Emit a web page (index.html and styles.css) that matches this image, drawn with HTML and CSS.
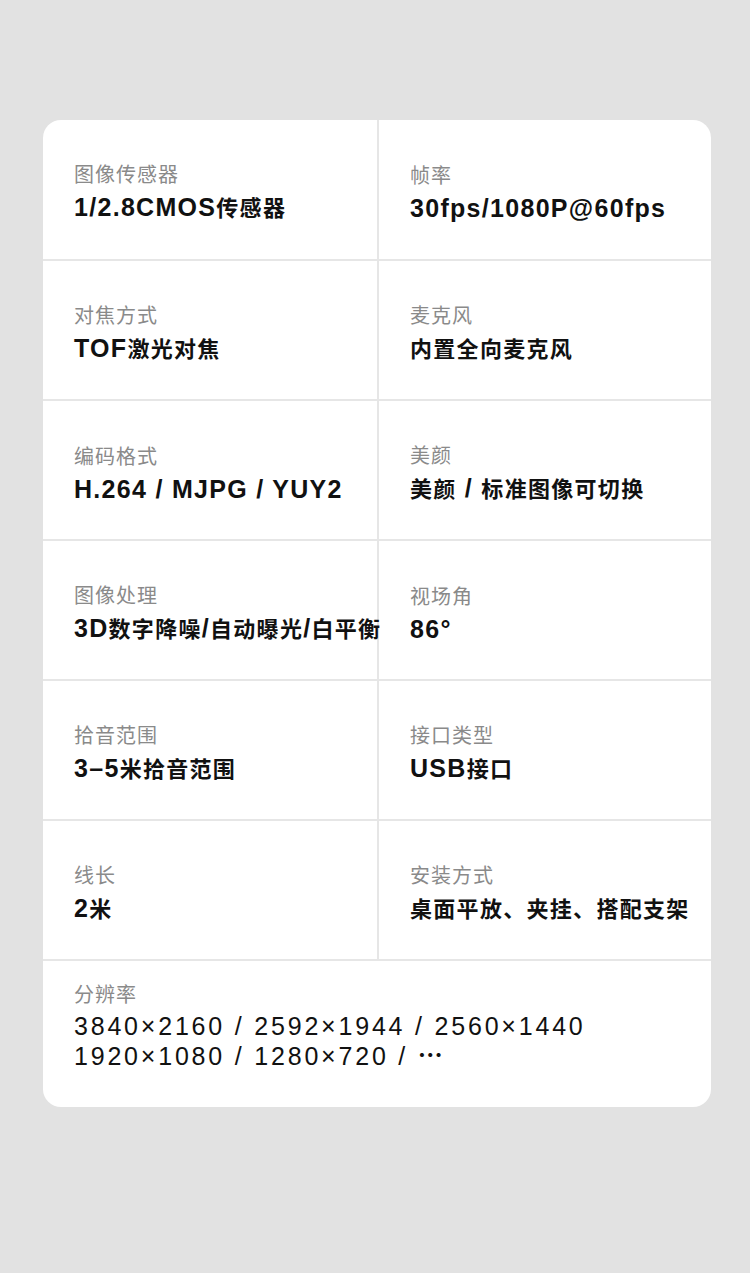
FILE: index.html
```html
<!DOCTYPE html>
<html lang="zh-CN">
<head>
<meta charset="utf-8">
<title>参数</title>
<link rel="stylesheet" href="styles.css">
</head>
<body>
<main class="page">
  <section class="card">
    <div class="grid">
      <div class="cell"><div class="label">图像传感器</div><div class="value">1/2.8CMOS<span class="c">传感器</span></div></div>
      <div class="cell"><div class="label">帧率</div><div class="value">30fps/1080P@60fps</div></div>
      <div class="cell"><div class="label">对焦方式</div><div class="value">TOF<span class="c">激光对焦</span></div></div>
      <div class="cell"><div class="label">麦克风</div><div class="value"><span class="c">内置全向麦克风</span></div></div>
      <div class="cell"><div class="label">编码格式</div><div class="value">H.264 / MJPG / YUY2</div></div>
      <div class="cell"><div class="label">美颜</div><div class="value"><span class="c">美颜</span> / <span class="c">标准图像可切换</span></div></div>
      <div class="cell"><div class="label">图像处理</div><div class="value">3D<span class="c">数字降噪</span>/<span class="c">自动曝光</span>/<span class="c">白平衡</span></div></div>
      <div class="cell"><div class="label">视场角</div><div class="value">86°</div></div>
      <div class="cell"><div class="label">拾音范围</div><div class="value">3–5<span class="c">米拾音范围</span></div></div>
      <div class="cell"><div class="label">接口类型</div><div class="value">USB<span class="c">接口</span></div></div>
      <div class="cell"><div class="label">线长</div><div class="value">2<span class="c">米</span></div></div>
      <div class="cell"><div class="label">安装方式</div><div class="value"><span class="c">桌面平放、夹挂、搭配支架</span></div></div>
    </div>
    <div class="full">
      <div class="label">分辨率</div>
      <div class="res">3840×2160 / 2592×1944 / 2560×1440</div>
      <div class="res">1920×1080 / 1280×720 / <span class="dots">⋯</span></div>
    </div>
  </section>
</main>
</body>
</html>
```

FILE: styles.css
```css
* { box-sizing: border-box; }
html, body {
  margin: 0;
  padding: 0;
  background: #e2e2e2;
}
body {
  font-family: "Liberation Sans", "Noto Sans CJK SC", sans-serif;
  color: #111;
}
.page {
  width: 750px;
  height: 1273px;
  padding: 120px 39px 0 43px;
}
.card {
  width: 668px;
  background: #fff;
  border-radius: 18px;
  overflow: hidden;
}
.grid {
  display: grid;
  grid-template-columns: 336px 332px;
}
.cell {
  height: 140px;
  border-bottom: 2px solid #e6e6e6;
  padding: 7px 0 0 31px;
  display: flex;
  flex-direction: column;
  justify-content: center;
  gap: 4px;
  white-space: nowrap;
}
.cell:nth-child(odd) {
  border-right: 2px solid #e6e6e6;
}
.cell:nth-child(-n+2) {
  height: 141px;
}
.cell:nth-child(1) {
  border-image: none;
}
.label {
  font-size: 20px;
  line-height: 26px;
  color: #8a8a8a;
  letter-spacing: 1px;
}
.value {
  font-size: 25px;
  line-height: 30px;
  font-weight: bold;
  letter-spacing: 1.3px;
}
.c {
  font-size: 22px;
}
.full {
  padding: 21px 31px 36px;
  display: flex;
  flex-direction: column;
}
.full .label {
  margin-bottom: 3px;
}
.res {
  font-size: 25px;
  line-height: 30px;
  letter-spacing: 2.8px;
  white-space: nowrap;
}
.dots {
  font-weight: bold;
}
```
